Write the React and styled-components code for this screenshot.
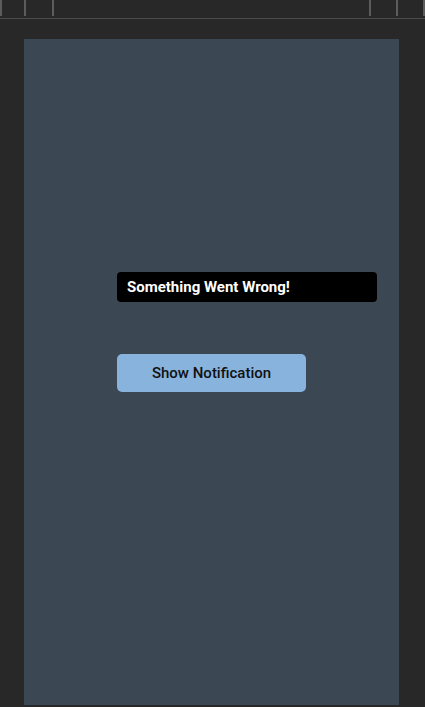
import styled, { createGlobalStyle } from 'styled-components';

const GlobalStyle = createGlobalStyle`
  html, body {
    margin: 0;
    padding: 0;
    background: #282828;
    font-family: Roboto, "Liberation Sans", sans-serif;
  }
`;

const Screen = styled.div`
  width: 425px;
  height: 707px;
  display: flex;
  flex-direction: column;
  background: #282828;
  overflow: hidden;
`;

const Toolbar = styled.div`
  height: 18px;
  display: flex;
  border-bottom: 1px solid #4a4a4a;
`;

const Divider = styled.span`
  width: 2px;
  height: 16px;
  background: #5c5c5c;
  margin-left: ${props => props.offset}px;
`;

const Spacer = styled.div`
  flex: 1;
`;

const Stage = styled.div`
  flex: 1;
  padding: 20px 26px 2px 24px;
  display: flex;
`;

const Panel = styled.div`
  flex: 1;
  background: #3b4752;
  display: flex;
  flex-direction: column;
  align-items: center;
  padding-top: 233px;
`;

const Stack = styled.div`
  width: 189px;
  display: flex;
  flex-direction: column;
`;

const Toast = styled.div`
  width: 260px;
  height: 30px;
  box-sizing: border-box;
  padding: 0 10px;
  display: flex;
  align-items: center;
  background: #000;
  color: #fff;
  border-radius: 4px;
  font-size: 15px;
  font-weight: 700;
  margin-bottom: 52px;
`;

const Button = styled.button`
  height: 38px;
  border: none;
  border-radius: 5px;
  background: #88b3dc;
  color: #111;
  font-family: Roboto, "Liberation Sans", sans-serif;
  font-size: 15px;
  font-weight: 500;
  cursor: pointer;
`;

export default function App() {
  return (
    <>
      <GlobalStyle />
      <Screen>
        <Toolbar>
          <Divider offset={0} />
          <Divider offset={22} />
          <Divider offset={26} />
          <Spacer />
          <Divider offset={0} />
          <Divider offset={25} />
          <Divider offset={25} />
        </Toolbar>
        <Stage>
          <Panel>
            <Stack>
              <Toast>Something Went Wrong!</Toast>
              <Button>Show Notification</Button>
            </Stack>
          </Panel>
        </Stage>
      </Screen>
    </>
  );
}
